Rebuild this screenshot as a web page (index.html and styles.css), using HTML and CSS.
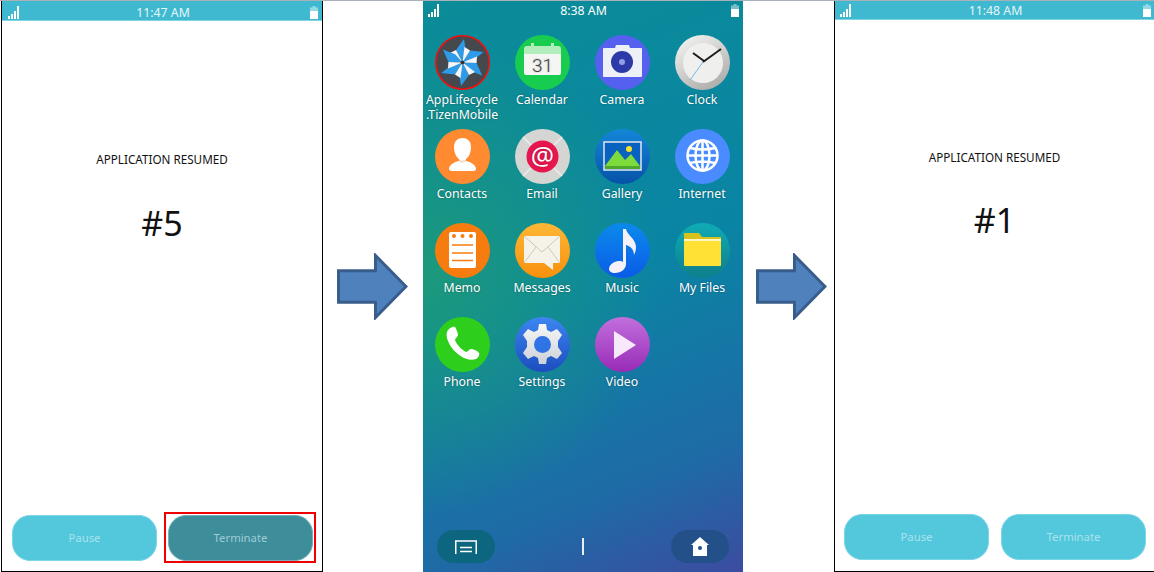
FILE: index.html
```html
<!DOCTYPE html>
<html lang="en">
<head>
    <meta charset="UTF-8">
    <meta name="viewport" content="width=device-width, initial-scale=1.0">
    <title>Application Lifecycle</title>
    <link rel="stylesheet" href="styles.css">
</head>
<body>

    <svg class="sprites" width="0" height="0">
        <defs>
            <linearGradient id="g-silver" x1="0.2" y1="0" x2="0.8" y2="1">
                <stop offset="0" stop-color="#f2f2f0"/>
                <stop offset="1" stop-color="#a9a9a7"/>
            </linearGradient>
            <linearGradient id="g-gallery" x1="0" y1="0" x2="0" y2="1">
                <stop offset="0" stop-color="#1586d8"/>
                <stop offset="1" stop-color="#0652a8"/>
            </linearGradient>
            <linearGradient id="g-messages" x1="0" y1="0" x2="0" y2="1">
                <stop offset="0" stop-color="#fdb735"/>
                <stop offset="1" stop-color="#f8910c"/>
            </linearGradient>
            <linearGradient id="g-music" x1="0" y1="0" x2="0" y2="1">
                <stop offset="0" stop-color="#0b8aec"/>
                <stop offset="1" stop-color="#0a5ce6"/>
            </linearGradient>
            <linearGradient id="g-files" x1="0" y1="0" x2="0" y2="1">
                <stop offset="0" stop-color="#10abb4"/>
                <stop offset="1" stop-color="#0e7f8c"/>
            </linearGradient>
            <linearGradient id="g-settings" x1="0" y1="0" x2="0" y2="1">
                <stop offset="0" stop-color="#3c86f2"/>
                <stop offset="1" stop-color="#1c4dbe"/>
            </linearGradient>
            <linearGradient id="g-gear" x1="0" y1="0" x2="0" y2="1">
                <stop offset="0" stop-color="#f6f6f6"/>
                <stop offset="1" stop-color="#cdd2d8"/>
            </linearGradient>
            <linearGradient id="g-video" x1="0" y1="0" x2="0" y2="1">
                <stop offset="0" stop-color="#c26fdd"/>
                <stop offset="1" stop-color="#982cb6"/>
            </linearGradient>
            <g id="blade">
                <path d="M21 15 29 4 31 17 27.500 27.500z" fill="#2d9be8"/>
                <path d="M27.500 27.500 15 18 21 15z" fill="#f4f6f8"/>
            </g>
        </defs>
        <symbol id="signal" viewBox="0 0 11 13">
            <path d="M0 10h2v3H0zM3 8h2v5H3zM6 5h2v8H6zM9 0h2v13H9z" fill="#fff"/>
        </symbol>
        <symbol id="battery" viewBox="0 0 8 13">
            <path d="M2.500 0h3v1.500H8V13H0V1.500h2.500z" fill="#fff" opacity=".45"/>
            <path d="M0 5h8v8H0z" fill="#fff"/>
        </symbol>
        <symbol id="arrow" viewBox="0 0 72 68">
            <path d="M1.500 18H39V2.500L70 34 39 65.500V50H1.500z" fill="#4f81bd" stroke="#385d8a" stroke-width="3"/>
        </symbol>
    </svg>

    <div class="phone phone-left">
        <div class="status-bar">
            <svg class="signal"><use href="#signal"/></svg>
            <span>11:47 AM</span>
            <svg class="battery"><use href="#battery"/></svg>
        </div>
        <p class="message">APPLICATION RESUMED</p>
        <p class="count">#5</p>
        <div class="buttons">
            <button class="btn">Pause</button>
            <button class="btn btn-pressed">Terminate</button>
        </div>
    </div>

    <svg class="arrow arrow-first"><use href="#arrow"/></svg>

    <div class="phone-home">
        <div class="status-bar home-status">
            <svg class="signal"><use href="#signal"/></svg>
            <span>8:38 AM</span>
            <svg class="battery"><use href="#battery"/></svg>
        </div>

        <div class="app-grid">
            <div class="app">
                <svg class="app-icon" viewBox="0 0 55 55">
                    <circle cx="27.500" cy="27.500" r="27" fill="#45494d"/>
                    <use href="#blade"/>
                    <use href="#blade" transform="rotate(60 27.500 27.500)"/>
                    <use href="#blade" transform="rotate(120 27.500 27.500)"/>
                    <use href="#blade" transform="rotate(180 27.500 27.500)"/>
                    <use href="#blade" transform="rotate(240 27.500 27.500)"/>
                    <use href="#blade" transform="rotate(300 27.500 27.500)"/>
                    <circle cx="27.500" cy="27.500" r="2" fill="#333"/>
                    <circle cx="27.500" cy="27.500" r="26.700" fill="none" stroke="#f01010" stroke-width="1.600"/>
                </svg>
                <span>AppLifecycle<br>.TizenMobile</span>
            </div>
            <div class="app">
                <svg class="app-icon" viewBox="0 0 55 55">
                    <circle cx="27.500" cy="27.500" r="27.500" fill="#17cc4f"/>
                    <path d="M9 14a3 3 0 0 1 3-3h31a3 3 0 0 1 3 3v6H9z" fill="#b4edbc"/>
                    <path d="M16 8h3v4h-3zM36 8h3v4h-3z" fill="#b4edbc"/>
                    <path d="M9 19h37v19a2 2 0 0 1-2 2H11a2 2 0 0 1-2-2z" fill="#f5f5f3"/>
                    <text x="27.500" y="37" class="cal-day">31</text>
                </svg>
                <span>Calendar</span>
            </div>
            <div class="app">
                <svg class="app-icon" viewBox="0 0 55 55">
                    <circle cx="27.500" cy="27.500" r="27.500" fill="#5560ee"/>
                    <path d="M9 13h11l1-3h13l1 3h11a1 1 0 0 1 1 1v27a1 1 0 0 1-1 1H9a1 1 0 0 1-1-1V14a1 1 0 0 1 1-1z" fill="#eef0f8"/>
                    <circle cx="27" cy="27" r="11" fill="#2c3aa8"/>
                    <circle cx="27" cy="27" r="3" fill="#8f9fe8"/>
                </svg>
                <span>Camera</span>
            </div>
            <div class="app">
                <svg class="app-icon" viewBox="0 0 55 55">
                    <circle cx="27.500" cy="27.500" r="27.500" fill="url(#g-silver)"/>
                    <circle cx="28" cy="28" r="20" fill="#efefed"/>
                    <path d="M29 26 18 18" stroke="#1c1c1c" stroke-width="2" fill="none"/>
                    <path d="M28 27 46 14" stroke="#1c1c1c" stroke-width="2" fill="none"/>
                    <path d="M28 27 15 45" stroke="#7ab6e0" stroke-width="1" fill="none"/>
                </svg>
                <span>Clock</span>
            </div>

            <div class="app">
                <svg class="app-icon" viewBox="0 0 55 55">
                    <circle cx="27.500" cy="27.500" r="27.500" fill="#ff8a30"/>
                    <path d="M19 18c0-6 4-9 8.500-9s8.500 3 8.500 9c0 5-2 10-5 12v2c5 1 10 4 10 8 0 1-1 2-3 2H17c-2 0-3-1-3-2 0-4 5-7 10-8v-2c-3-2-5-7-5-12z" fill="#fff"/>
                    <path d="M24 30c2 2 5 2 7 0v2c-1 2-6 2-7 0z" fill="#f6dcc8"/>
                </svg>
                <span>Contacts</span>
            </div>
            <div class="app">
                <svg class="app-icon" viewBox="0 0 55 55">
                    <circle cx="27.500" cy="27.500" r="27.500" fill="#d5d5d3"/>
                    <path d="M8 8 47 47M47 8 8 47" stroke="#ececea" stroke-width="1.500"/>
                    <circle cx="27.500" cy="27.500" r="16" fill="#e8164f"/>
                    <text x="27.500" y="36" class="at-sign">@</text>
                </svg>
                <span>Email</span>
            </div>
            <div class="app">
                <svg class="app-icon" viewBox="0 0 55 55">
                    <circle cx="27.500" cy="27.500" r="27.500" fill="url(#g-gallery)"/>
                    <path d="M9 13h37v28H9z" fill="#0a62c0" stroke="#dfe8ee" stroke-width="1.500"/>
                    <path d="M10 37 22 21 30 31 36 25 45 37z" fill="#7ddb3c"/>
                    <path d="M10 37h35v3H10z" fill="#4fa82a"/>
                    <circle cx="34" cy="20" r="3" fill="#f7e12a"/>
                </svg>
                <span>Gallery</span>
            </div>
            <div class="app">
                <svg class="app-icon" viewBox="0 0 55 55">
                    <circle cx="27.500" cy="27.500" r="27.500" fill="#4a8cff"/>
                    <g fill="none" stroke="#fff" stroke-width="2.500">
                        <circle cx="27.500" cy="26.500" r="15"/>
                        <ellipse cx="27.500" cy="26.500" rx="7" ry="15"/>
                        <path d="M27.500 11.500v30M12.500 26.500h30M15 19q12.500 3 25 0M15 34q12.500-3 25 0"/>
                    </g>
                </svg>
                <span>Internet</span>
            </div>

            <div class="app">
                <svg class="app-icon" viewBox="0 0 55 55">
                    <circle cx="27.500" cy="27.500" r="27.500" fill="#f77c0f"/>
                    <path d="M14 11a2 2 0 0 1 2-2h23a2 2 0 0 1 2 2v32a2 2 0 0 1-2 2H16a2 2 0 0 1-2-2z" fill="#fff"/>
                    <path d="M17 22h21M17 30h21M17 37.500h21" stroke="#f77c0f" stroke-width="1.600"/>
                    <circle cx="19" cy="13" r="2" fill="#f77c0f"/>
                    <circle cx="27.500" cy="13" r="2" fill="#f77c0f"/>
                    <circle cx="36" cy="13" r="2" fill="#f77c0f"/>
                </svg>
                <span>Memo</span>
            </div>
            <div class="app">
                <svg class="app-icon" viewBox="0 0 55 55">
                    <circle cx="27.500" cy="27.500" r="27.500" fill="url(#g-messages)"/>
                    <path d="M9 13h36v27h-7v7l-9-7H9z" fill="#f5f2ea"/>
                    <path d="M9 13 27 29 45 13M9 40 21 24M45 40 33 24" fill="none" stroke="#cfc8ba" stroke-width="1"/>
                </svg>
                <span>Messages</span>
            </div>
            <div class="app">
                <svg class="app-icon" viewBox="0 0 55 55">
                    <circle cx="27.500" cy="27.500" r="27.500" fill="url(#g-music)"/>
                    <path d="M28 6h3c1 6 10 10 10 18 0 3-1 6-2 8 0-6-4-9-8-10v19c0 5-5 9-11 9-4 0-6-2-6-4 0-4 5-8 10-8 2 0 3 0 4 1z" fill="#f4f1f8"/>
                </svg>
                <span>Music</span>
            </div>
            <div class="app">
                <svg class="app-icon" viewBox="0 0 55 55">
                    <circle cx="27.500" cy="27.500" r="27.500" fill="url(#g-files)"/>
                    <path d="M9 10h15l3 4h19v4H9z" fill="#d6c21c"/>
                    <path d="M9 16h37v2H9z" fill="#fff6c0"/>
                    <path d="M9 18h37v24a1 1 0 0 1-1 1H10a1 1 0 0 1-1-1z" fill="#ffe135"/>
                </svg>
                <span>My Files</span>
            </div>

            <div class="app">
                <svg class="app-icon" viewBox="0 0 55 55">
                    <circle cx="27.500" cy="27.500" r="27.500" fill="#2ecf1c"/>
                    <path d="M13 13c2-2 5-4 7-3 1 1 3 6 3 8s-3 3-3 5c1 4 7 10 11 12 2 0 3-3 5-3s7 2 8 4c1 2-1 5-3 6-8 3-18-3-24-11-5-7-7-14-4-18z" fill="#fff"/>
                </svg>
                <span>Phone</span>
            </div>
            <div class="app">
                <svg class="app-icon" viewBox="0 0 55 55">
                    <circle cx="27.500" cy="27.500" r="27.500" fill="url(#g-settings)"/>
                    <path d="M24 7h7l1 6 4 2 6-3 5 6-4 6v6l4 6-5 6-6-3-4 2-1 6h-7l-1-6-4-2-6 3-5-6 4-6v-6l-4-6 5-6 6 3 4-2z" fill="url(#g-gear)"/>
                    <circle cx="27.500" cy="27.500" r="8.500" fill="#2f73e4"/>
                </svg>
                <span>Settings</span>
            </div>
            <div class="app">
                <svg class="app-icon" viewBox="0 0 55 55">
                    <circle cx="27.500" cy="27.500" r="27.500" fill="url(#g-video)"/>
                    <path d="M19 14 41 28 19 42z" fill="#f8e8fb"/>
                </svg>
                <span>Video</span>
            </div>
        </div>

        <div class="home-bar">
            <div class="pill pill-left">
                <svg width="22" height="14" viewBox="0 0 22 14">
                    <path d="M.750 14V1h20.500v13" fill="none" stroke="#fff" stroke-width="1.500"/>
                    <path d="M5 7.500h12M5 11.500h12" fill="none" stroke="#fff" stroke-width="1.500"/>
                </svg>
            </div>
            <div class="page-mark"></div>
            <div class="pill pill-right">
                <svg width="18" height="19" viewBox="0 0 18 19">
                    <path d="M9 0 18 8h-2v11H2V8H0z" fill="#fff"/>
                    <circle cx="9" cy="11" r="2" fill="#235089"/>
                </svg>
            </div>
        </div>
    </div>

    <svg class="arrow arrow-second"><use href="#arrow"/></svg>

    <div class="phone phone-right">
        <div class="status-bar">
            <svg class="signal"><use href="#signal"/></svg>
            <span>11:48 AM</span>
            <svg class="battery"><use href="#battery"/></svg>
        </div>
        <p class="message">APPLICATION RESUMED</p>
        <p class="count">#1</p>
        <div class="buttons">
            <button class="btn">Pause</button>
            <button class="btn">Terminate</button>
        </div>
    </div>

</body>
</html>
```

FILE: styles.css
```css
html, body {
    height: 100%;
}

body {
    font-family: 'Noto Sans', sans-serif;
    background-color: #ffffff;
    margin: 0;
    display: flex;
    align-items: stretch;
    overflow: hidden;
    border-top: 1px solid #a9b0b8;
    box-sizing: border-box;
}

.sprites {
    position: absolute;
}

/* white phones on both sides */
.phone {
    display: flex;
    flex-direction: column;
    flex-shrink: 0;
    height: 572px;
    margin-top: -1px;
    background-color: #ffffff;
    border: 1px solid #000000;
    box-sizing: border-box;
    color: #111111;
}

.phone-left {
    width: 322px;
    margin-left: 1px;
}

.phone-right {
    width: 320px;
    border-right: none;
}

.status-bar {
    display: grid;
    grid-template-columns: 1fr auto 1fr;
    align-items: center;
    flex-shrink: 0;
    background-color: #3eb9cf;
    border-bottom: 1px solid #7fd3e2;
    color: #e6f6f9;
    font-size: 12.3px;
}

.phone-left .status-bar {
    height: 16px;
    padding: 3px 4px 0 6px;
}

.phone-right .status-bar {
    height: 18px;
    padding: 0 3px 0 5px;
}

.signal {
    width: 11px;
    height: 13px;
}

.battery {
    width: 8px;
    height: 13px;
    justify-self: end;
}

.message {
    margin: 130px 0 0;
    text-align: center;
    font-size: 11.7px;
    line-height: 16px;
}

.count {
    margin: 34px 0 0;
    text-align: center;
    font-size: 34px;
    line-height: 44px;
}

.phone-right .message {
    margin-top: 129px;
}

.phone-right .count {
    margin-top: 33px;
}

.buttons {
    display: flex;
    gap: 11px;
    margin-top: auto;
    padding: 0 0 10px 10px;
}

.phone-right .buttons {
    gap: 12px;
    padding: 0 0 11px 9px;
}

.btn {
    position: relative;
    width: 145px;
    height: 46px;
    padding: 0 0 2px;
    border: 1px solid #7bd6e5;
    border-radius: 18px;
    background-color: #53c7db;
    color: #a9e3ee;
    font-family: inherit;
    font-size: 11.300px;
}

.btn-pressed {
    background-color: #3d8d9b;
    border-color: #73b0bb;
    color: #9fcbd3;
}

/* red box marking the button in the screenshot */
.btn-pressed::after {
    content: "";
    position: absolute;
    top: -4px;
    left: -5px;
    right: -4px;
    bottom: -3px;
    border: 2px solid #f00000;
}

.arrow {
    width: 71px;
    height: 67px;
    align-self: center;
    flex-shrink: 0;
}

.arrow-first {
    margin: 0 15px 0 14px;
}

.arrow-second {
    margin: 0 7px 0 13px;
}

/* home screen in the middle */
.phone-home {
    width: 320px;
    display: flex;
    flex-direction: column;
    flex-shrink: 0;
    color: #ffffff;
    background:
        radial-gradient(circle at 0 48%, rgba(34, 160, 110, 0.75), rgba(34, 160, 110, 0) 55%),
        linear-gradient(158deg, #0b8c98 0%, #0a84a4 50%, #1f6aa6 82%, #3c4ca0 100%);
}

.home-status {
    height: 19px;
    padding: 0 4px 0 5px;
    background-color: transparent;
    border-bottom: none;
    color: #ffffff;
}

.app-grid {
    display: grid;
    grid-template-columns: repeat(4, 80px);
    grid-auto-rows: 94px;
    margin: 15px 0 0 -1px;
}

.app {
    display: flex;
    flex-direction: column;
    align-items: center;
    text-align: center;
    font-size: 12.3px;
    line-height: 15px;
    text-shadow: 0 0 2px rgba(0, 0, 0, 0.35);
    white-space: nowrap;
}

.app span {
    margin-top: 2px;
}

.app-icon {
    width: 55px;
    height: 55px;
    margin-left: 1px;
    flex-shrink: 0;
}

.cal-day {
    font-size: 19px;
    font-weight: 300;
    text-anchor: middle;
    fill: #444444;
    font-family: Roboto, 'Noto Sans', sans-serif;
}

.at-sign {
    font-size: 26px;
    text-anchor: middle;
    fill: #ffffff;
    font-family: 'Noto Sans', sans-serif;
}

.home-bar {
    display: flex;
    align-items: center;
    justify-content: space-between;
    margin-top: auto;
    padding: 0 14px 9px;
}

.pill {
    display: flex;
    align-items: center;
    justify-content: center;
    width: 58px;
    height: 33px;
    border-radius: 17px;
}

.pill-left {
    background-color: #0d667f;
}

.pill-right {
    background-color: #235089;
}

.page-mark {
    width: 2px;
    height: 17px;
    background-color: #e8f0f6;
}
```
